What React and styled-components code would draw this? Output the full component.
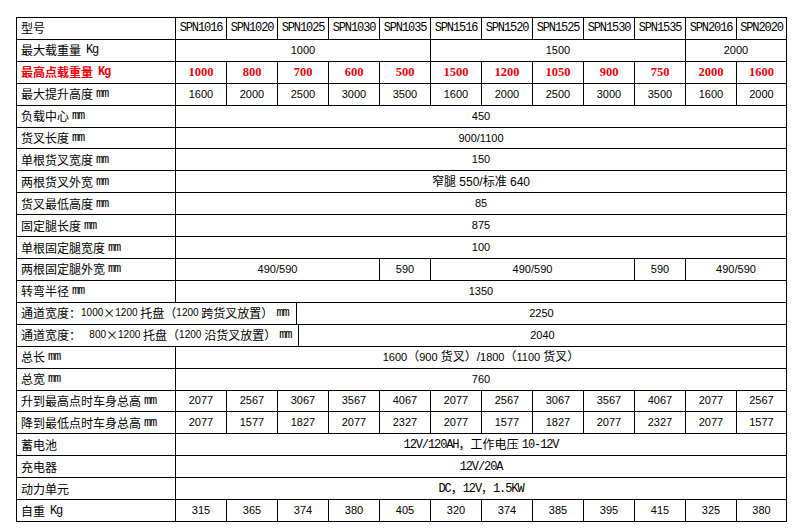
import styled, { createGlobalStyle } from 'styled-components';

const GlobalStyle = createGlobalStyle`
  html, body { margin: 0; padding: 0; background: #fff; }
  body {
    font-family: "Liberation Sans", "Noto Sans CJK SC", sans-serif;
    color: #000;
    -webkit-font-smoothing: antialiased;
  }
`;

const Page = styled.div`
  width: 800px;
  height: 532px;
  padding: 17px 0 0 16px;
  box-sizing: border-box;
`;

const Table = styled.div`
  display: grid;
  grid-template-rows: repeat(23, 1fr);
  width: 771px;
  height: 505px;
  border-top: 1px solid #000;
  border-left: 1px solid #000;
  box-sizing: border-box;
`;

const Row = styled.div`
  display: grid;
  grid-template-columns: ${p => p.$cols || '159px repeat(11, 51px) 50px'};
  min-height: 0;
`;

const Cell = styled.div`
  grid-column: span ${p => p.$span || 1};
  display: flex;
  align-items: center;
  justify-content: center;
  border-right: 1px solid #000;
  border-bottom: 1px solid #000;
  box-sizing: border-box;
  white-space: pre;
  overflow: hidden;
  font-size: ${p => p.$size || '11px'};
  line-height: 1;
  color: #000;
`;

const Label = styled(Cell)`
  justify-content: flex-start;
  padding-left: 4px;
  font-family: "Noto Sans CJK SC", sans-serif;
  font-size: 12px;
  color: ${p => (p.$red ? '#e8000b' : '#000')};
  font-weight: ${p => (p.$red ? 700 : 400)};
`;

const Model = styled(Cell)`
  font-family: "Liberation Mono", monospace;
  font-size: 12px;
  letter-spacing: -1.1px;
`;

const RedNum = styled(Cell)`
  font-family: "Liberation Serif", serif;
  font-size: 12.5px;
  font-weight: 700;
  color: #e8000b;
`;

const Mono = styled.span`
  font-family: "Liberation Mono", monospace;
  font-size: 12px;
  letter-spacing: -1.1px;
`;

const Unit = styled(Mono)`
  margin-left: ${p => p.$gap || '3px'};
  color: inherit;
  font-weight: inherit;
`;

const Digits = styled.span`
  font-family: "Liberation Sans", sans-serif;
  font-size: ${p => p.$size || '11px'};
`;

const MODELS = [
  'SPN1016', 'SPN1020', 'SPN1025', 'SPN1030', 'SPN1035', 'SPN1516',
  'SPN1520', 'SPN1525', 'SPN1530', 'SPN1535', 'SPN2016', 'SPN2020',
];

const RED = ['1000', '800', '700', '600', '500', '1500', '1200', '1050', '900', '750', '2000', '1600'];
const LIFT = ['1600', '2000', '2500', '3000', '3500', '1600', '2000', '2500', '3000', '3500', '1600', '2000'];
const HIGH = ['2077', '2567', '3067', '3567', '4067', '2077', '2567', '3067', '3567', '4067', '2077', '2567'];
const LOW = ['2077', '1577', '1827', '2077', '2327', '2077', '1577', '1827', '2077', '2327', '2077', '1577'];
const WEIGHT = ['315', '365', '374', '380', '405', '320', '374', '385', '395', '415', '325', '380'];

const mm = <Unit>mm</Unit>;
const kg = <Unit $gap="5px">Kg</Unit>;

const FULL = [
  ['负载中心', '450'],
  ['货叉长度', '900/1100'],
  ['单根货叉宽度', '150'],
  ['两根货叉外宽', '窄腿 550/标准 640'],
  ['货叉最低高度', '85'],
  ['固定腿长度', '875'],
  ['单根固定腿宽度', '100'],
];

const Each = ({ label, values }) => (
  <Row>
    <Label>{label}</Label>
    {values.map((v, i) => <Cell key={i}>{v}</Cell>)}
  </Row>
);

const Full = ({ label, children, size }) => (
  <Row>
    <Label>{label}</Label>
    <Cell $span={12} $size={size}>{children}</Cell>
  </Row>
);

export default function App() {
  return (
    <>
      <GlobalStyle />
      <Page>
        <Table>
          <Row>
            <Label>型号</Label>
            {MODELS.map(m => <Model key={m}>{m}</Model>)}
          </Row>
          <Row>
            <Label>最大载重量{kg}</Label>
            <Cell $span={5}>1000</Cell>
            <Cell $span={5}>1500</Cell>
            <Cell $span={2}>2000</Cell>
          </Row>
          <Row>
            <Label $red>最高点载重量<Unit $gap="5px">Kg</Unit></Label>
            {RED.map((v, i) => <RedNum key={i}>{v}</RedNum>)}
          </Row>
          <Each label={<>最大提升高度{mm}</>} values={LIFT} />
          {FULL.map(([l, v]) => (
            <Full key={l} label={<>{l}{mm}</>} size={/[^\x00-\x7f]/.test(v) ? '12px' : undefined}>{v}</Full>
          ))}
          <Row>
            <Label>两根固定腿外宽{mm}</Label>
            <Cell $span={4}>490/590</Cell>
            <Cell>590</Cell>
            <Cell $span={4}>490/590</Cell>
            <Cell>590</Cell>
            <Cell $span={2}>490/590</Cell>
          </Row>
          <Full label={<>转弯半径{mm}</>}>1350</Full>
          <Row $cols="280px 1fr">
            <Label>通道宽度：<Digits $size="10px">1000</Digits>×<Digits $size="10px">1200 </Digits>托盘（<Digits $size="10px">1200 </Digits>跨货叉放置）{mm}</Label>
            <Cell>2250</Cell>
          </Row>
          <Row $cols="282px 1fr">
            <Label>通道宽度：<Digits $size="10px">   800</Digits>×<Digits $size="10px">1200 </Digits>托盘（<Digits $size="10px">1200 </Digits>沿货叉放置）{mm}</Label>
            <Cell>2040</Cell>
          </Row>
          <Full label={<>总长{mm}</>} size="12px"><Digits>1600</Digits>（<Digits>900 </Digits>货叉）/<Digits>1800</Digits>（<Digits>1100 </Digits>货叉）</Full>
          <Full label={<>总宽{mm}</>}>760</Full>
          <Each label={<>升到最高点时车身总高{mm}</>} values={HIGH} />
          <Each label={<>降到最低点时车身总高{mm}</>} values={LOW} />
          <Full label="蓄电池" size="12px"><Mono>12V/120AH</Mono>，工作电压 <Mono>10-12V</Mono></Full>
          <Full label="充电器"><Mono>12V/20A</Mono></Full>
          <Full label="动力单元" size="12px"><Mono>DC</Mono>，<Mono>12V</Mono>，<Mono>1.5KW</Mono></Full>
          <Each label={<>自重{kg}</>} values={WEIGHT} />
        </Table>
      </Page>
    </>
  );
}
